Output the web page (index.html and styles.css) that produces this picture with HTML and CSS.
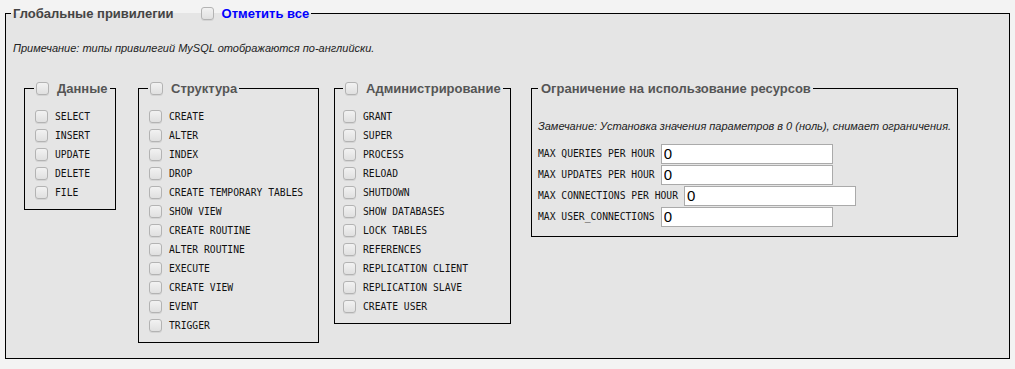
FILE: index.html
```html
<!DOCTYPE html>
<html lang="ru">
<head>
<meta charset="utf-8">
<link rel="stylesheet" href="styles.css">
</head>
<body>
<fieldset class="outer">
  <legend class="outer-legend"><span class="outer-title">Глобальные привилегии</span><input type="checkbox" class="cb cb-all"><span class="check-all">Отметить все</span></legend>
  <p class="note">Примечание: типы привилегий MySQL отображаются по-английски.</p>
  <div class="groups">
    <fieldset class="group g-data">
      <legend class="group-legend"><input type="checkbox" class="cb cb-leg">Данные</legend>
      <div class="item"><input type="checkbox" class="cb"><span>SELECT</span></div>
      <div class="item"><input type="checkbox" class="cb"><span>INSERT</span></div>
      <div class="item"><input type="checkbox" class="cb"><span>UPDATE</span></div>
      <div class="item"><input type="checkbox" class="cb"><span>DELETE</span></div>
      <div class="item"><input type="checkbox" class="cb"><span>FILE</span></div>
    </fieldset>
    <fieldset class="group g-struct">
      <legend class="group-legend"><input type="checkbox" class="cb cb-leg">Структура</legend>
      <div class="item"><input type="checkbox" class="cb"><span>CREATE</span></div>
      <div class="item"><input type="checkbox" class="cb"><span>ALTER</span></div>
      <div class="item"><input type="checkbox" class="cb"><span>INDEX</span></div>
      <div class="item"><input type="checkbox" class="cb"><span>DROP</span></div>
      <div class="item"><input type="checkbox" class="cb"><span>CREATE TEMPORARY TABLES</span></div>
      <div class="item"><input type="checkbox" class="cb"><span>SHOW VIEW</span></div>
      <div class="item"><input type="checkbox" class="cb"><span>CREATE ROUTINE</span></div>
      <div class="item"><input type="checkbox" class="cb"><span>ALTER ROUTINE</span></div>
      <div class="item"><input type="checkbox" class="cb"><span>EXECUTE</span></div>
      <div class="item"><input type="checkbox" class="cb"><span>CREATE VIEW</span></div>
      <div class="item"><input type="checkbox" class="cb"><span>EVENT</span></div>
      <div class="item"><input type="checkbox" class="cb"><span>TRIGGER</span></div>
    </fieldset>
    <fieldset class="group g-admin">
      <legend class="group-legend admin-legend"><input type="checkbox" class="cb cb-leg">Администрирование</legend>
      <div class="item"><input type="checkbox" class="cb"><span>GRANT</span></div>
      <div class="item"><input type="checkbox" class="cb"><span>SUPER</span></div>
      <div class="item"><input type="checkbox" class="cb"><span>PROCESS</span></div>
      <div class="item"><input type="checkbox" class="cb"><span>RELOAD</span></div>
      <div class="item"><input type="checkbox" class="cb"><span>SHUTDOWN</span></div>
      <div class="item"><input type="checkbox" class="cb"><span>SHOW DATABASES</span></div>
      <div class="item"><input type="checkbox" class="cb"><span>LOCK TABLES</span></div>
      <div class="item"><input type="checkbox" class="cb"><span>REFERENCES</span></div>
      <div class="item"><input type="checkbox" class="cb"><span>REPLICATION CLIENT</span></div>
      <div class="item"><input type="checkbox" class="cb"><span>REPLICATION SLAVE</span></div>
      <div class="item"><input type="checkbox" class="cb"><span>CREATE USER</span></div>
    </fieldset>
    <fieldset class="group g-res">
      <legend class="group-legend res-legend">Ограничение на использование ресурсов</legend>
      <p class="res-note">Замечание: Установка значения параметров в 0 (ноль), снимает ограничения.</p>
      <div class="res-row"><span class="res-label">MAX QUERIES PER HOUR</span><input class="res-input" type="text" value="0"></div>
      <div class="res-row"><span class="res-label">MAX UPDATES PER HOUR</span><input class="res-input" type="text" value="0"></div>
      <div class="res-row"><span class="res-label">MAX CONNECTIONS PER HOUR</span><input class="res-input" type="text" value="0"></div>
      <div class="res-row"><span class="res-label">MAX USER_CONNECTIONS</span><input class="res-input" type="text" value="0"></div>
    </fieldset>
  </div>
</fieldset>
</body>
</html>
```

FILE: styles.css
```css
html, body {
  margin: 0;
  padding: 0;
  background: #f3f3f3;
  font-family: "Liberation Sans", Arial, sans-serif;
  color: #222;
}

body {
  padding: 4px 5px 0 5px;
}

.outer {
  margin: 0;
  border: 1px solid #000;
  background: #e5e5e5;
  padding: 0 6px 9px 7px;
  box-sizing: border-box;
  height: 355px;
}

.outer-legend {
  display: flex;
  align-items: center;
  height: 18px;
  padding: 0 2px;
  margin-left: -2px;
  font-size: 13px;
  font-weight: bold;
}

.outer-title {
  color: #444;
}

.check-all {
  color: #00f;
}

.cb {
  -webkit-appearance: none;
  appearance: none;
  box-sizing: border-box;
  width: 13px;
  height: 13px;
  margin: 0;
  border: 1px solid #b3b3b3;
  border-radius: 3px;
  background: linear-gradient(#f2f2f2, #e0e0e0);
  box-shadow: 0 1px 0 rgba(0,0,0,0.07);
  flex: none;
}

.cb-all {
  margin: 0 8px 0 27px;
}

.note {
  margin: 19px 0 0 0;
  font-size: 11px;
  font-style: italic;
  line-height: 14px;
}

.groups {
  display: flex;
  align-items: flex-start;
  margin-top: 25px;
}

.group {
  margin: 0;
  border: 1px solid #000;
  padding: 11px 4px 7px 10px;
  box-sizing: border-box;
  min-width: 0;
}

.g-data { margin-left: 11px; width: 92px; }
.g-struct { margin-left: 22px; width: 181px; }
.g-admin { margin-left: 15px; width: 177px; padding-left: 8px; padding-right: 2px; }
.g-res { margin-left: 20px; width: 427px; padding: 11px 4px 9px 6px; }

.group-legend {
  display: flex;
  align-items: center;
  height: 16px;
  padding: 0 2px;
  margin-left: -1px;
  font-size: 13px;
  font-weight: bold;
  color: #555;
}

.admin-legend {
  margin-left: 0;
}

.cb-leg {
  margin-right: 8px;
}

.res-legend {
  padding: 0 2px 0 3px;
  margin-left: 0;
}

.item {
  display: flex;
  align-items: center;
  height: 19px;
  font-family: "DejaVu Sans Mono", monospace;
  font-size: 9.7px;
  color: #111;
}

.item .cb {
  margin-right: 7px;
}

.res-note {
  margin: 12px 0 0 0;
  font-size: 11px;
  font-style: italic;
  line-height: 14px;
  white-space: nowrap;
}

.res-row {
  display: flex;
  align-items: center;
  height: 21px;
}

.res-note + .res-row { margin-top: 10px; }

.res-label {
  font-family: "DejaVu Sans Mono", monospace;
  font-size: 9.7px;
  color: #111;
  margin-right: 6px;
}

.res-input {
  box-sizing: border-box;
  width: 172px;
  height: 20px;
  border: 1px solid #aaa;
  background: #fff;
  padding: 0 2px;
  margin: 0;
  font-family: "Liberation Sans", Arial, sans-serif;
  font-size: 15px;
  color: #000;
  outline: none;
}
```
